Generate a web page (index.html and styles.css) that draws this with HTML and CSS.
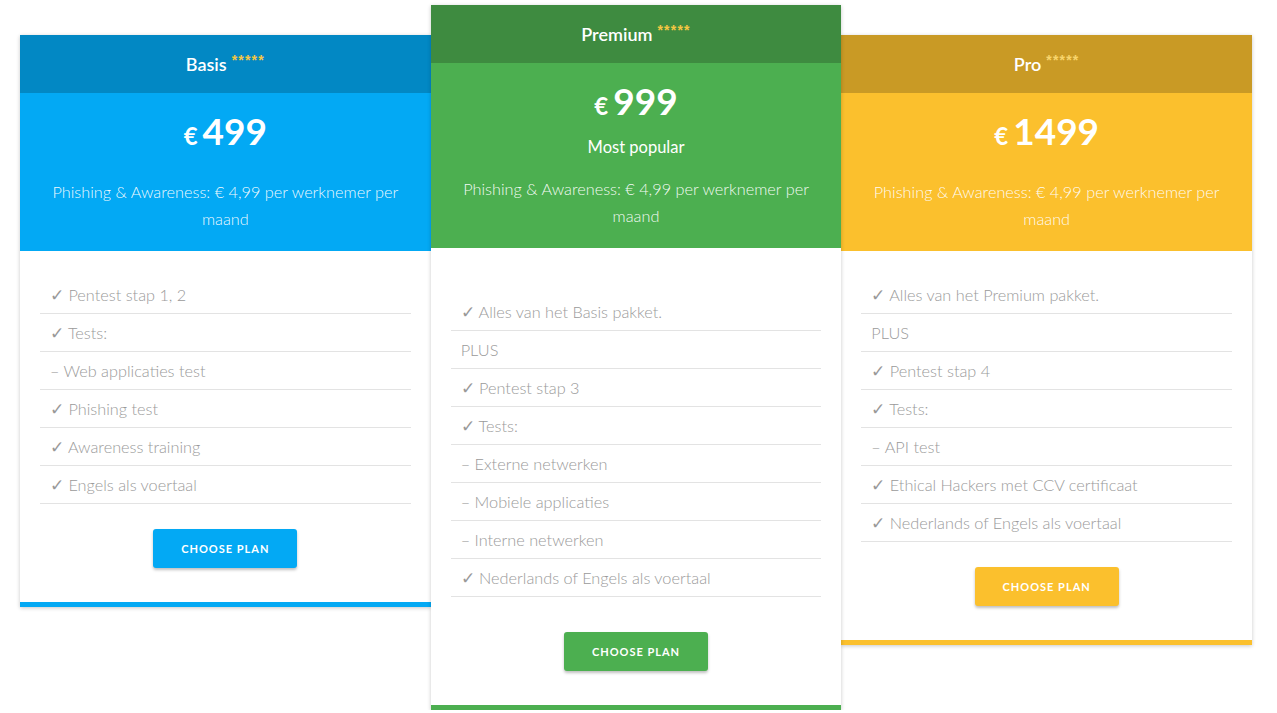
FILE: index.html
```html
<!DOCTYPE html>
<html lang="nl">
<head>
<meta charset="utf-8">
<title>Pricing</title>
<link rel="stylesheet" href="styles.css">
</head>
<body>
<div class="plans">
  <div class="plan plan--basis">
    <div class="plan__head"><span>Basis</span><span class="stars">*****</span></div>
    <div class="plan__price">
      <div class="price"><span class="cur">€</span><span>499</span></div>
      <p class="desc desc--wide">Phishing &amp; Awareness: € 4,99 per werknemer per maand</p>
    </div>
    <ul class="features">
      <li><span class="ck">✓</span> Pentest stap 1, 2</li>
      <li><span class="ck">✓</span> Tests:</li>
      <li>– Web applicaties test</li>
      <li><span class="ck">✓</span> Phishing test</li>
      <li><span class="ck">✓</span> Awareness training</li>
      <li><span class="ck">✓</span> Engels als voertaal</li>
    </ul>
    <div class="plan__action"><a class="btn" href="#">Choose plan</a></div>
  </div>

  <div class="plan plan--premium">
    <div class="plan__head"><span>Premium</span><span class="stars">*****</span></div>
    <div class="plan__price">
      <div class="price"><span class="cur">€</span><span>999</span></div>
      <p class="popular">Most popular</p>
      <p class="desc">Phishing &amp; Awareness: € 4,99 per werknemer per maand</p>
    </div>
    <ul class="features features--spaced">
      <li><span class="ck">✓</span> Alles van het Basis pakket.</li>
      <li>PLUS</li>
      <li><span class="ck">✓</span> Pentest stap 3</li>
      <li><span class="ck">✓</span> Tests:</li>
      <li>– Externe netwerken</li>
      <li>– Mobiele applicaties</li>
      <li>– Interne netwerken</li>
      <li><span class="ck">✓</span> Nederlands of Engels als voertaal</li>
    </ul>
    <div class="plan__action plan__action--spaced"><a class="btn" href="#">Choose plan</a></div>
  </div>

  <div class="plan plan--pro">
    <div class="plan__head"><span>Pro</span><span class="stars">*****</span></div>
    <div class="plan__price">
      <div class="price"><span class="cur">€</span><span>1499</span></div>
      <p class="desc desc--wide">Phishing &amp; Awareness: € 4,99 per werknemer per maand</p>
    </div>
    <ul class="features">
      <li><span class="ck">✓</span> Alles van het Premium pakket.</li>
      <li>PLUS</li>
      <li><span class="ck">✓</span> Pentest stap 4</li>
      <li><span class="ck">✓</span> Tests:</li>
      <li>– API test</li>
      <li><span class="ck">✓</span> Ethical Hackers met CCV certificaat</li>
      <li><span class="ck">✓</span> Nederlands of Engels als voertaal</li>
    </ul>
    <div class="plan__action"><a class="btn" href="#">Choose plan</a></div>
  </div>
</div>
</body>
</html>
```

FILE: styles.css
```css
* { box-sizing: border-box; }

html, body {
  margin: 0;
  padding: 0;
  background: #ffffff;
}

body {
  font-family: "Source Sans Pro", Lato, "Liberation Sans", sans-serif;
  color: #9e9e9e;
}

.plans {
  display: flex;
  align-items: flex-start;
  width: 1232px;
  margin-left: 20px;
  padding-top: 5px;
}

.plan {
  flex: 1 1 0;
  background: #fff;
  box-shadow: 0 1px 4px rgba(0, 0, 0, 0.22);
  border-bottom: 5px solid var(--main);
  margin-top: 30px;
}

.plan--basis { --main: #03a9f4; --dark: #0288c4; }
.plan--premium { --main: #4caf50; --dark: #3e8b40; margin-top: 0; position: relative; z-index: 1; }
.plan--pro { --main: #fbc02d; --dark: #c99a25; }

.plan__head {
  height: 58px;
  background: var(--dark);
  color: #fff;
  font-size: 18px;
  font-weight: 600;
  display: flex;
  align-items: center;
  justify-content: center;
  gap: 5px;
}

.stars {
  color: #f5c743;
  font-family: "Liberation Sans", sans-serif;
  font-size: 14px;
  font-weight: 700;
  line-height: 1;
  letter-spacing: 1.2px;
  margin-top: -8px;
}

.plan--pro .stars { color: #f8d56c; }

.plan__price {
  background: var(--main);
  color: #fff;
  text-align: center;
  padding: 18px 20px 19px;
}

.price {
  display: flex;
  justify-content: center;
  align-items: baseline;
  gap: 5px;
  height: 40px;
  font-size: 37px;
  line-height: 40px;
  font-weight: 700;
}

.cur {
  font-size: 24px;
  line-height: 40px;
}

.popular {
  margin: 13px 0 0;
  font-size: 16.5px;
  line-height: 26px;
  font-weight: 400;
}

.desc {
  margin: 14.5px 0 0;
  font-size: 16.3px;
  line-height: 27px;
  font-weight: 300;
  color: rgba(255, 255, 255, 0.95);
}

.desc--wide { margin-top: 26.5px; }

.features {
  list-style: none;
  margin: 25px 20px 0;
  padding: 0;
}

.features--spaced { margin-top: 45px; }

.features li {
  height: 38px;
  line-height: 37px;
  border-bottom: 1px solid #e3e3e3;
  font-size: 16.3px;
  font-weight: 300;
  color: #9a9a9a;
  padding-left: 10px;
  white-space: nowrap;
}

.ck {
  font-family: "DejaVu Sans", sans-serif;
  font-size: 17px;
  color: #999;
}

.plan__action {
  display: flex;
  justify-content: center;
  padding: 25px 0 34px;
}

.plan__action--spaced { padding-top: 35px; }

.btn {
  display: flex;
  align-items: center;
  justify-content: center;
  width: 144px;
  height: 39px;
  background: var(--main);
  color: #fff;
  text-decoration: none;
  text-transform: uppercase;
  font-size: 11px;
  font-weight: 700;
  letter-spacing: 1px;
  border-radius: 3px;
  box-shadow: 0 2px 3px rgba(0, 0, 0, 0.25);
}
```
